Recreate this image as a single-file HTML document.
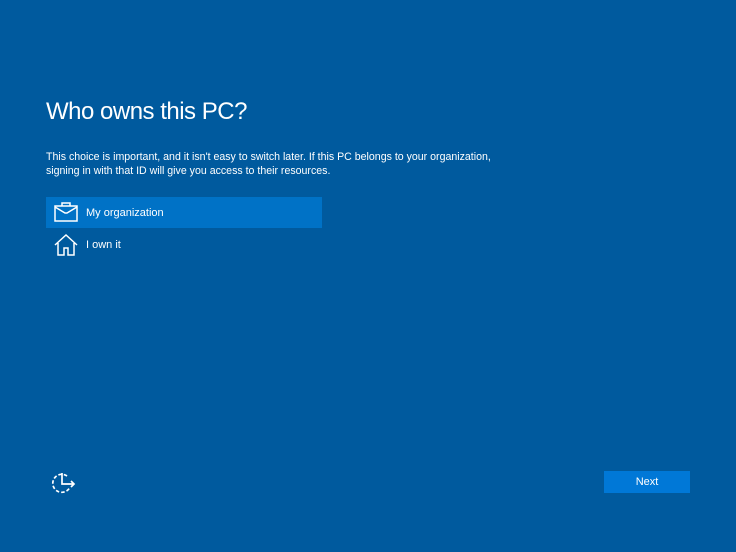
<!DOCTYPE html>
<html><head><style>
body{margin:0;width:736px;height:552px;background:#005a9e;font-family:"Liberation Sans",sans-serif;color:#fff;position:relative;overflow:hidden}
h1{position:absolute;left:46px;top:98px;margin:0;font-weight:normal;font-size:24px;letter-spacing:-0.5px}
.p{position:absolute;left:46px;top:150px;font-size:10.6px;line-height:14px}
.row{position:absolute;left:46px;width:276px;height:31px;font-size:11px}
.row span{position:absolute;left:40px;top:10px}
.row svg{position:absolute;left:8px;top:4px}
.btn{position:absolute;left:604px;top:471px;width:86px;height:22px;background:#0078d7;font-size:11px;text-align:center;line-height:22px}
</style></head><body>
<h1>Who owns this PC?</h1>
<div class="p">This choice is important, and it isn't easy to switch later. If this PC belongs to your organization,<br>signing in with that ID will give you access to their resources.</div>
<div class="row" style="top:197px;background:#0072c6">
<svg width="24" height="22" viewBox="0 0 24 22" fill="none" stroke="#fff" stroke-width="1.5"><rect x="1" y="5" width="22" height="15"/><path d="M8 5V2h8v3M1 6l10 6h2l10-6"/></svg>
<span>My organization</span></div>
<div class="row" style="top:229px">
<svg width="24" height="24" viewBox="0 0 24 24" fill="none" stroke="#fff" stroke-width="1.5"><path d="M1 12L12 2l11 10M4 10v12h6v-7h4v7h6V10"/></svg>
<span>I own it</span></div>
<svg style="position:absolute;left:50px;top:470px" width="28" height="26" viewBox="0 0 28 26" fill="none" stroke="#fff" stroke-width="1.7"><path d="M17 6A9 9 0 1 0 20 17" stroke-dasharray="3.5 2"/><path d="M12 3v11h12M21 11l3 3-3 3"/></svg>
<div class="btn">Next</div>
</body></html>
